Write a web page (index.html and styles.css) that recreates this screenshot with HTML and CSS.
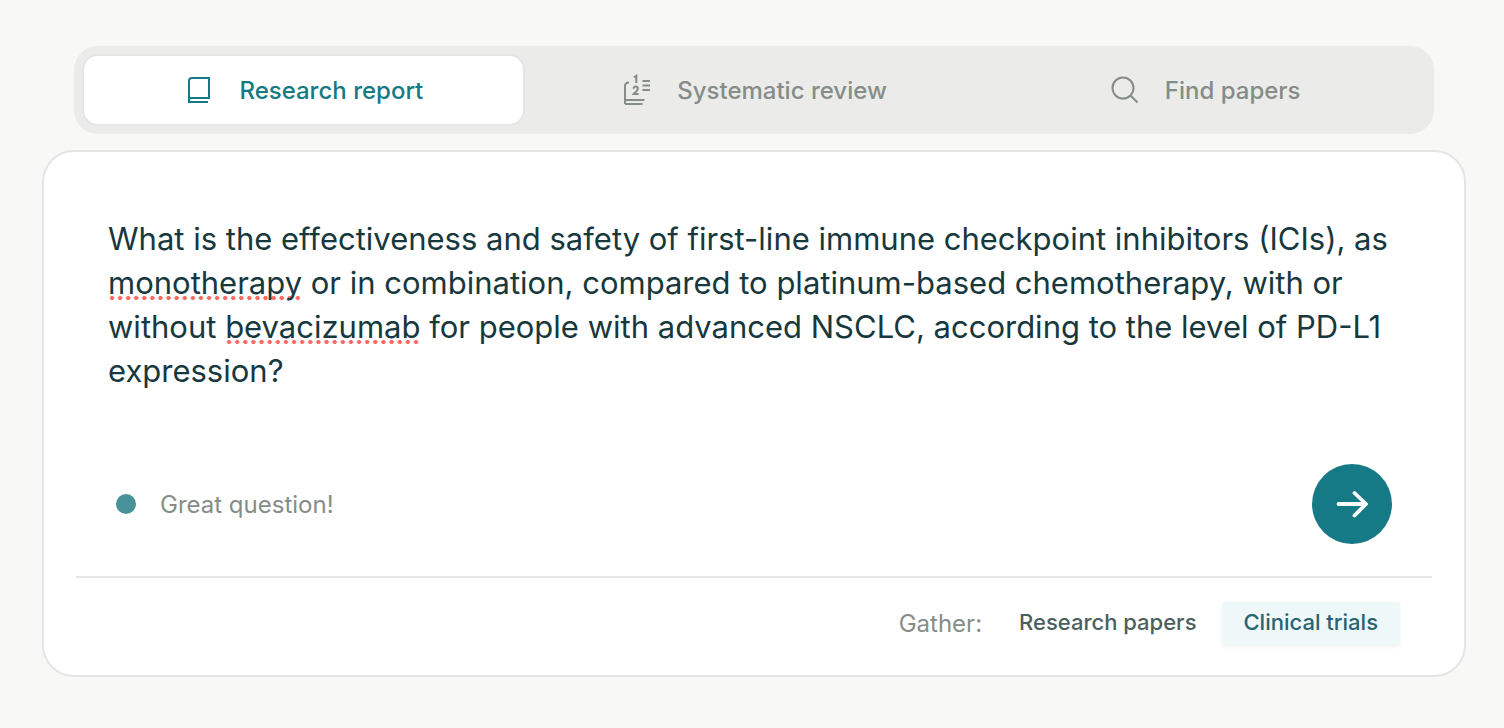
FILE: index.html
```html
<!DOCTYPE html>
<html lang="en">
<head>
    <meta charset="UTF-8">
    <meta name="viewport" content="width=device-width, initial-scale=1.0">
    <title>Research report</title>
    <link rel="stylesheet" href="styles.css">
</head>
<body>
    <main class="page">
        <div class="tabs" role="tablist">
            <button type="button" class="tab active" role="tab" aria-selected="true">
                <svg class="tab-icon" viewBox="0 0 32 32">
                    <path d="M25 28H6V7a3 3 0 0 1 3-3h17v20H8a2 2 0 0 0-2 2" />
                </svg>
                Research report
            </button>
            <button type="button" class="tab" role="tab" aria-selected="false">
                <svg class="tab-icon" viewBox="0 0 32 32">
                    <path d="M8 8.500C5 8.500 4 9.500 4 12v18" />
                    <path d="M4 28a2 2 0 0 1 2-2h17.500M4 30h17.500" />
                    <path d="M13 3.300l2.300-1.500V9" />
                    <path d="M12.700 14.800c0-3 4.200-3 4.200-.2 0 1.800-2.200 3-4.200 5.400h4.900" />
                    <path d="M21.500 7h7.500M21.500 11.500h7.500M21.500 16h7.500" />
                </svg>
                Systematic review
            </button>
            <button type="button" class="tab" role="tab" aria-selected="false">
                <svg class="tab-icon" viewBox="0 0 32 32">
                    <circle cx="14" cy="14" r="10.500" />
                    <path d="M21.500 21.500l7 7" />
                </svg>
                Find papers
            </button>
        </div>

        <form class="card">
            <div class="question">
                <div class="spelling" id="spelling" aria-hidden="true"></div>
                <textarea id="question-text" class="question-text" rows="4" spellcheck="false" aria-label="Research question">What is the effectiveness and safety of first-line immune checkpoint inhibitors (ICIs), as monotherapy or in combination, compared to platinum-based chemotherapy, with or without bevacizumab for people with advanced NSCLC, according to the level of PD-L1 expression?</textarea>
            </div>

            <div class="status-row">
                <span class="dot"></span>
                <span class="status">Great question!</span>
                <button type="submit" class="send" aria-label="Submit question">
                    <svg class="send-icon" viewBox="0 0 40 40">
                        <path d="M6.500 20h27M22.500 9l11.500 11-11.500 11.500" />
                    </svg>
                </button>
            </div>

            <div class="gather">
                <span class="gather-label">Gather:</span>
                <button type="button" class="chip">Research papers</button>
                <button type="button" class="chip selected">Clinical trials</button>
            </div>
        </form>
    </main>

    <script src="script.js"></script>
</body>
</html>
```
FILE: styles.css
```css
* {
    box-sizing: border-box;
}

body {
    margin: 0;
    background: #f8f8f6;
    font-family: Inter, "Liberation Sans", sans-serif;
    font-size: 24px;
    color: #858d89;
}

button {
    border: none;
    background: none;
    font: inherit;
    color: inherit;
    cursor: pointer;
}

.page {
    padding: 46px 38px 48px 42px;
}

/* Tabs */
.tabs {
    display: flex;
    gap: 8px;
    margin: 0 32px 16px;
    padding: 8px;
    border-radius: 24px;
    background: #ebebe9;
}

.tab {
    flex: 1 1 0;
    display: flex;
    align-items: center;
    justify-content: center;
    gap: 24px;
    height: 72px;
    padding: 0;
    border: 2px solid transparent;
    border-radius: 16px;
    font-weight: 500;
    white-space: nowrap;
}

.tab.active {
    background: #fff;
    border-color: #e4e5e4;
    color: #157a85;
}

.tab-icon {
    width: 32px;
    height: 32px;
    fill: none;
    stroke: currentColor;
    stroke-width: 2;
}

/* Question card */
.card {
    padding: 65px 32px 30px;
    background: #fff;
    border: 2px solid #e4e5e4;
    border-radius: 32px;
}

.question {
    position: relative;
    margin: 0 32px;
}

.spelling,
.question-text {
    width: 100%;
    padding: 0;
    font: 400 31px/44px Inter, "Liberation Sans", sans-serif;
    white-space: pre-wrap;
    overflow-wrap: break-word;
}

/* sits under the textarea and only shows the dotted marks */
.spelling {
    position: absolute;
    inset: 0;
    visibility: hidden;
}

.spelling mark {
    position: relative;
}

.spelling mark::after {
    content: "";
    position: absolute;
    left: 0;
    right: 0;
    bottom: 1px;
    height: 4px;
    background: radial-gradient(circle, #ff6b66 1.8px, transparent 2.4px) 0 0 / 8px 4px round;
    visibility: visible;
}

.question-text {
    display: block;
    position: relative;
    border: none;
    outline: none;
    resize: none;
    overflow: hidden;
    background: transparent;
    color: #17383d;
}

.status-row {
    display: flex;
    align-items: center;
    padding: 71px 40px 32px;
    border-bottom: 2px solid #e4e5e4;
}

.dot {
    width: 20px;
    height: 20px;
    margin-right: 24px;
    border-radius: 50%;
    background: #48929b;
}

.send {
    display: flex;
    align-items: center;
    justify-content: center;
    width: 80px;
    height: 80px;
    margin-left: auto;
    padding: 0;
    border-radius: 50%;
    background: #157a85;
    color: #fff;
}

.send-icon {
    width: 40px;
    height: 40px;
    fill: none;
    stroke: currentColor;
    stroke-width: 3.8;
    stroke-linecap: round;
    stroke-linejoin: round;
}

/* Gather */
.gather {
    display: flex;
    align-items: center;
    justify-content: flex-end;
    gap: 4px;
    padding: 24px 32px 0;
}

.gather-label {
    margin-right: 12px;
}

.chip {
    height: 43px;
    padding: 0 22px 3px 21px;
    border-radius: 2px;
    font-size: 22px;
    font-weight: 500;
    color: #4b5f5d;
}

.chip.selected {
    background: #eff8f9;
    color: #2a646f;
    box-shadow: 0 2px 4px rgba(0, 0, 0, 0.05);
}
```
FILE: script.js
```js
const questionText = document.getElementById("question-text");
const spelling = document.getElementById("spelling");
const unknownWords = /\b(monotherapy|bevacizumab)\b/g;

function markSpelling() {
    spelling.innerHTML = questionText.value
        .replace(/&/g, "&amp;")
        .replace(/</g, "&lt;")
        .replace(unknownWords, "<mark>$1</mark>");
}

questionText.addEventListener("input", markSpelling);
markSpelling();

document.querySelectorAll(".tab").forEach(tab => {
    tab.addEventListener("click", () => {
        document.querySelectorAll(".tab").forEach(other => {
            other.classList.toggle("active", other === tab);
            other.setAttribute("aria-selected", other === tab);
        });
    });
});
```
